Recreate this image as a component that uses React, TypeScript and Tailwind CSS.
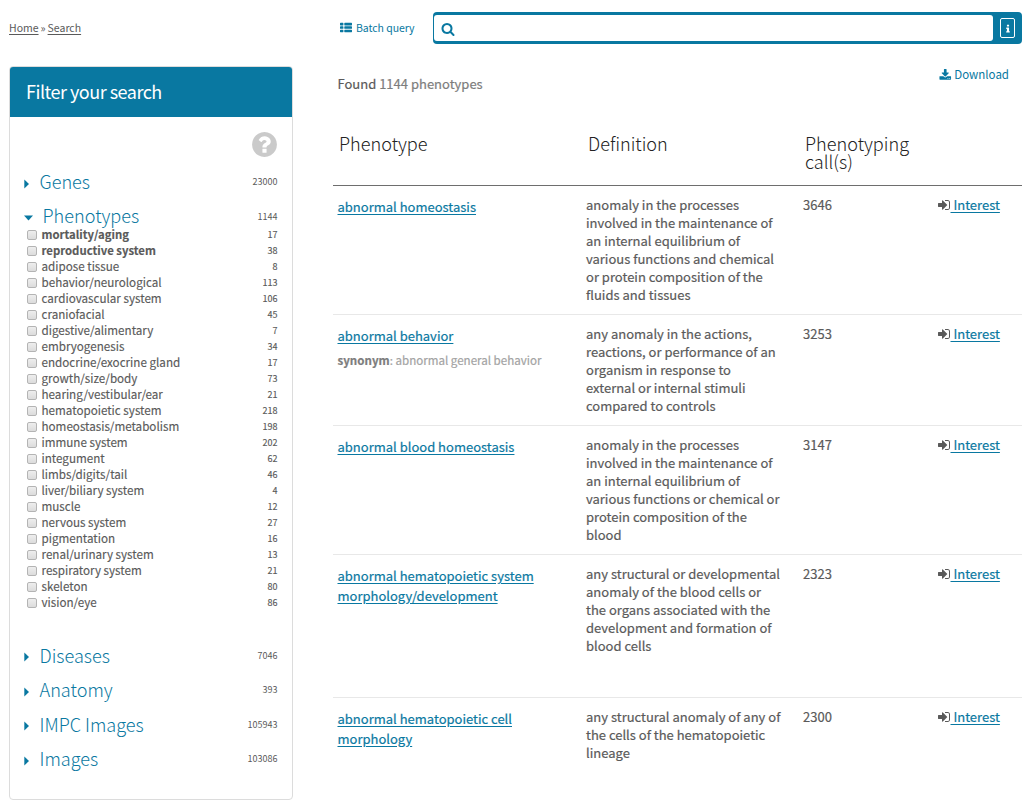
import React from "react";

const ICONS = {
  thList:
    "M512 1248v192q0 40-28 68t-68 28h-320q-40 0-68-28t-28-68v-192q0-40 28-68t68-28h320q40 0 68 28t28 68zM512 736v192q0 40-28 68t-68 28h-320q-40 0-68-28t-28-68v-192q0-40 28-68t68-28h320q40 0 68 28t28 68zM1792 1248v192q0 40-28 68t-68 28h-960q-40 0-68-28t-28-68v-192q0-40 28-68t68-28h960q40 0 68 28t28 68zM512 224v192q0 40-28 68t-68 28h-320q-40 0-68-28t-28-68v-192q0-40 28-68t68-28h320q40 0 68 28t28 68zM1792 736v192q0 40-28 68t-68 28h-960q-40 0-68-28t-28-68v-192q0-40 28-68t68-28h960q40 0 68 28t28 68zM1792 224v192q0 40-28 68t-68 28h-960q-40 0-68-28t-28-68v-192q0-40 28-68t68-28h960q40 0 68 28t28 68z",
  signIn:
    "M1312 896q0 26-19 45l-544 544q-19 19-45 19t-45-19-19-45v-288h-448q-26 0-45-19t-19-45v-384q0-26 19-45t45-19h448v-288q0-26 19-45t45-19 45 19l544 544q19 19 19 45zm352-352v704q0 119-84.5 203.5t-203.5 84.5h-320q-13 0-22.5-9.5t-9.5-22.5q0-4-1-20t-.5-26.5 3-23.5 10-19.5 20.5-6.5h320q66 0 113-47t47-113v-704q0-66-47-113t-113-47h-312l-11.5-1-11.5-3-8-5.5-7-9-2-13.5q0-4-1-20t-.5-26.5 3-23.5 10-19.5 20.5-6.5h320q119 0 203.5 84.5t84.5 203.5z",
  search:
    "M1216 832q0-185-131.5-316.5t-316.5-131.5-316.5 131.5-131.5 316.5 131.5 316.5 316.5 131.5 316.5-131.5 131.5-316.5zm512 832q0 52-38 90t-90 38q-54 0-90-38l-343-342q-179 124-399 124-143 0-273.5-55.5t-225-150-150-225-55.5-273.5 55.5-273.5 150-225 225-150 273.5-55.5 273.5 55.5 225 150 150 225 55.5 273.5q0 220-124 399l343 343q37 37 37 90z",
  download:
    "M1344 1344q0-26-19-45t-45-19-45 19-19 45 19 45 45 19 45-19 19-45zm256 0q0-26-19-45t-45-19-45 19-19 45 19 45 45 19 45-19 19-45zm128-224v320q0 40-28 68t-68 28h-1472q-40 0-68-28t-28-68v-320q0-40 28-68t68-28h465l135 136q58 56 136 56t136-56l136-136h464q40 0 68 28t28 68zm-325-569q17 41-14 70l-448 448q-18 19-45 19t-45-19l-448-448q-31-29-14-70 17-39 59-39h256v-448q0-26 19-45t45-19h256q26 0 45 19t19 45v448h256q42 0 59 39z",
  question:
    "M1024 1376v-192q0-14-9-23t-23-9h-192q-14 0-23 9t-9 23v192q0 14 9 23t23 9h192q14 0 23-9t9-23zm256-672q0-88-55.5-163t-138.5-116-170-41q-243 0-371 213-15 24 8 42l132 100q7 6 19 6 16 0 25-12 53-68 86-92 34-24 86-24 48 0 85.5 26t37.5 59q0 38-20 61t-68 45q-63 28-115.5 86.5t-52.5 125.5v36q0 14 9 23t23 9h192q14 0 23-9t9-23q0-19 21.5-49.5t54.5-49.5q32-18 49-28.5t46-35 44.5-48 28-60.5 12.5-81zm384 192q0 209-103 385.5t-279.5 279.5-385.5 103-385.5-103-279.5-279.5-103-385.5 103-385.5 279.5-279.5 385.5-103 385.5 103 279.5 279.5 103 385.5z",
  info:
    "M1216 1344v128q0 26-19 45t-45 19h-512q-26 0-45-19t-19-45v-128q0-26 19-45t45-19h64v-384h-64q-26 0-45-19t-19-45v-128q0-26 19-45t45-19h384q26 0 45 19t19 45v576h64q26 0 45 19t19 45zm-128-1152v192q0 26-19 45t-45 19h-256q-26 0-45-19t-19-45v-192q0-26 19-45t45-19h256q26 0 45 19t19 45z",
};

function Icon({ name, className }: { name: keyof typeof ICONS; className: string }) {
  return (
    <svg viewBox="0 0 1792 1792" fill="currentColor" className={`shrink-0 ${className}`} aria-hidden="true">
      <path d={ICONS[name]} />
    </svg>
  );
}

const SUBFACETS: [string, number][] = [
  ["mortality/aging", 17],
  ["reproductive system", 38],
  ["adipose tissue", 8],
  ["behavior/neurological", 113],
  ["cardiovascular system", 106],
  ["craniofacial", 45],
  ["digestive/alimentary", 7],
  ["embryogenesis", 34],
  ["endocrine/exocrine gland", 17],
  ["growth/size/body", 73],
  ["hearing/vestibular/ear", 21],
  ["hematopoietic system", 218],
  ["homeostasis/metabolism", 198],
  ["immune system", 202],
  ["integument", 62],
  ["limbs/digits/tail", 46],
  ["liver/biliary system", 4],
  ["muscle", 12],
  ["nervous system", 27],
  ["pigmentation", 16],
  ["renal/urinary system", 13],
  ["respiratory system", 21],
  ["skeleton", 80],
  ["vision/eye", 86],
];

function Facet({ label, count, open }: { label: string; count: number; open?: boolean }) {
  return (
    <div className="flex h-[34.4px] items-center">
      {open ? (
        <svg viewBox="0 0 10 6" className="mt-[2px] mr-[8.5px] h-[6px] w-[10px] fill-[#0978a1]">
          <path d="M0 0.5h9L4.5 5.5z" />
        </svg>
      ) : (
        <svg viewBox="0 0 6 10" className="mt-[3px] mr-[9.5px] h-[10px] w-[6px] fill-[#0978a1]">
          <path d="M0.3 0.5v9L5 5z" />
        </svg>
      )}
      <span className={`flex-1 text-[18.1px] leading-[20px] font-light text-[#0978a1] ${open ? "-mt-[4px]" : "-mt-[2px]"}`}>
        {label}
      </span>
      <span className="text-[9px] leading-[12px]">{count}</span>
    </div>
  );
}

type Result = { name: string; synonym?: string; definition: string; calls: number; height: string };

const RESULTS: Result[] = [
  {
    name: "abnormal homeostasis",
    definition:
      "anomaly in the processes involved in the maintenance of an internal equilibrium of various functions and chemical or protein composition of the fluids and tissues",
    calls: 3646,
    height: "h-[129px]",
  },
  {
    name: "abnormal behavior",
    synonym: "abnormal general behavior",
    definition:
      "any anomaly in the actions, reactions, or performance of an organism in response to external or internal stimuli compared to controls",
    calls: 3253,
    height: "h-[111px]",
  },
  {
    name: "abnormal blood homeostasis",
    definition:
      "anomaly in the processes involved in the maintenance of an internal equilibrium of various functions or chemical or protein composition of the blood",
    calls: 3147,
    height: "h-[129px]",
  },
  {
    name: "abnormal hematopoietic system morphology/development",
    definition:
      "any structural or developmental anomaly of the blood cells or the organs associated with the development and formation of blood cells",
    calls: 2323,
    height: "h-[143px]",
  },
  {
    name: "abnormal hematopoietic cell morphology",
    definition: "any structural anomaly of any of the cells of the hematopoietic lineage",
    calls: 2300,
    height: "h-[129px]",
  },
];

const GRID = "grid grid-cols-[249px_217px_135px_88px]";

export default function App() {
  return (
    <div className="flex h-[808px] w-[1034px] overflow-hidden bg-white font-['Noto_Sans_CJK_SC',sans-serif] text-[#5a5a5a]">
      <aside className="ml-[9px] w-[284px] shrink-0">
        <nav className="flex h-[66px] gap-[2px] pt-[20px] text-[10.5px] leading-[16px]">
          <a className="underline underline-offset-2">Home</a>
          <span>»</span>
          <a className="underline underline-offset-2">Search</a>
        </nav>
        <section className="h-[734px] rounded-[4px] border border-[#dcdcdc]">
          <h2 className="flex h-[50px] items-center rounded-t-[3px] bg-[#0978a1] pb-[2px] pl-4 text-[18px] leading-[24px] tracking-[-0.5px] text-white">
            Filter your search
          </h2>
          <div className="pr-[14.5px] pl-[14px]">
            <div className="flex h-[48px] justify-end pt-[13px]">
              <Icon name="question" className="-mr-[1.5px] h-[29px] w-[29px] text-[#cacaca]" />
            </div>
            <Facet label="Genes" count={23000} />
            <Facet label="Phenotypes" count={1144} open />
            <ul className="-mt-[7px] h-[412px] [-webkit-text-stroke:0.15px]">
              {SUBFACETS.map(([label, count], i) => (
                <li key={label} className="flex h-4 items-center pl-[3px]">
                  <span className="mr-[4.5px] h-[10px] w-[10px] rounded-[2px] border border-[#b4b4b4] bg-linear-to-b from-[#eeeeee] to-[#dcdcdc]" />
                  <span className={`-mt-[2px] flex-1 leading-[14px] ${i < 2 ? "text-[11.35px] font-bold" : "text-[11.65px]"}`}>
                    {label}
                  </span>
                  <span className="text-[9px] leading-4">{count}</span>
                </li>
              ))}
            </ul>
            <Facet label="Diseases" count={7046} />
            <Facet label="Anatomy" count={393} />
            <Facet label="IMPC Images" count={105943} />
            <Facet label="Images" count={103086} />
          </div>
        </section>
      </aside>

      <main className="ml-10 w-[689px] shrink-0">
        <div className="flex h-[66px] pt-3">
          <a className="flex h-8 w-[100px] items-center gap-[4px] pl-[7px] text-[10.5px] tracking-[-0.05px] whitespace-nowrap text-[#0978a1]">
            <Icon name="thList" className="h-[12px] w-[12px]" />
            Batch query
          </a>
          <div className="flex h-8 flex-1 rounded-[4px] bg-[#0978a1] py-[3px] pr-[7px] pl-px">
            <div className="flex w-[559px] items-center rounded-[3px] bg-white pl-[7px]">
              <Icon name="search" className="mt-[2px] h-[14px] w-[14px] text-[#0978a1]" />
            </div>
            <div className="mt-[3px] ml-auto flex h-5 w-[15px] items-center justify-center rounded-[2px] border border-white text-white">
              <Icon name="info" className="mt-[2px] h-[10px] w-[10px]" />
            </div>
          </div>
        </div>

        <div className="flex h-[60px] justify-between pr-[13px] pl-[4.5px]">
          <p className="pt-[8px] text-[13px] leading-5 [-webkit-text-stroke:0.2px]">
            Found <span className="text-[#7d7d7d]">1144 phenotypes</span>
          </p>
          <a className="flex h-[18px] items-center gap-[2.5px] text-[11.5px] text-[#0978a1]">
            <Icon name="download" className="h-[12.5px] w-[12.5px]" />
            Download
          </a>
        </div>

        <div className={`${GRID} h-[60px] border-b border-[#6e6e6e] pt-[8px] text-[18.1px] leading-[18px] font-light text-[#222222]`}>
          <span className="pl-[6px]">Phenotype</span>
          <span className="pl-[6px]">Definition</span>
          <span className="pl-[6px]">Phenotyping call(s)</span>
        </div>

        {RESULTS.map((r) => (
          <div
            key={r.name}
            className={`${GRID} ${r.height} border-b border-[#e8e8e8] pt-[10px] text-[13px] leading-[18px] [-webkit-text-stroke:0.2px]`}
          >
            <div className="pt-px pr-6 pl-[4.5px] leading-5">
              <a className="text-[#0978a1] underline underline-offset-2">{r.name}</a>
              {r.synonym && (
                <p className="pt-[4px] text-[11.57px] text-[#a3a3a3]">
                  <b className="text-[#7d7d7d]">synonym</b>: {r.synonym}
                </p>
              )}
            </div>
            <div className="pr-[17px] pl-1">{r.definition}</div>
            <div className="pl-1">{r.calls}</div>
            <div className="flex h-[18px] items-center">
              <Icon name="signIn" className="ml-[3px] h-[14px] w-[14px]" />
              <a className="-ml-[0.5px] whitespace-pre text-[#0978a1] underline underline-offset-2"> Interest</a>
            </div>
          </div>
        ))}
      </main>
    </div>
  );
}
